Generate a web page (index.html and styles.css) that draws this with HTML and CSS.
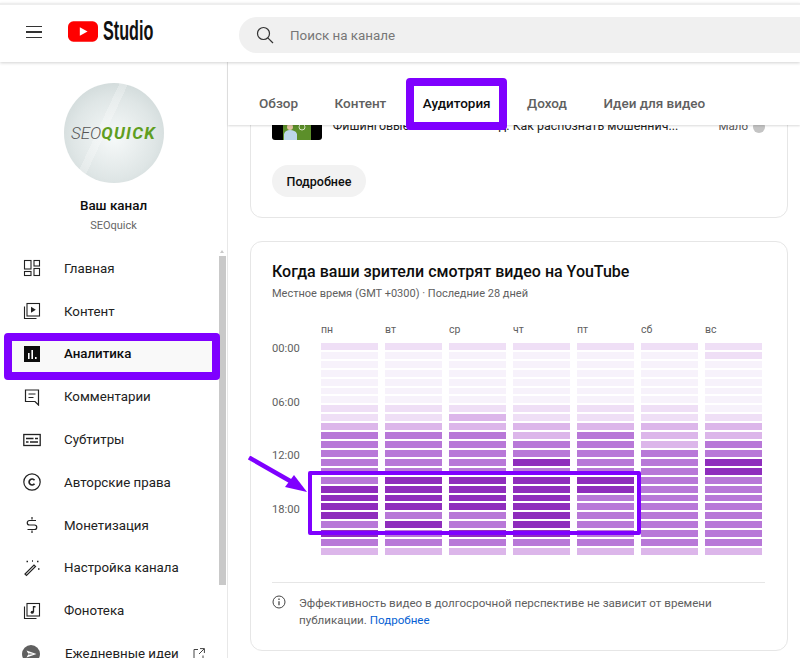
FILE: index.html
```html
<!DOCTYPE html>
<html lang="ru">
<head>
    <meta charset="UTF-8">
    <title>YouTube Studio - Аудитория</title>
    <link rel="stylesheet" href="styles.css">
</head>
<body>
    <header class="topbar">
        <button class="menu-btn"><span></span><span></span><span></span></button>
        <a href="#" class="logo">
            <svg width="30" height="21" viewBox="0 0 31 21"><rect width="31" height="21" rx="5.5" fill="#f00"/><path d="M12.2 6v9l8-4.5z" fill="#fff"/></svg>
            <span class="logo-text">Studio</span>
        </a>
        <div class="search">
            <svg width="18" height="18" viewBox="0 0 18 18" fill="none" stroke="#333" stroke-width="1.2"><circle cx="7.5" cy="7.5" r="6"/><path d="M11.8 11.8l5.2 5.2"/></svg>
            <span>Поиск на канале</span>
        </div>
    </header>

    <div class="layout">
        <aside class="sidebar">
            <div class="channel">
                <div class="avatar"><span class="seo">SEO</span><span class="quick">QUICK</span></div>
                <div class="channel-name">Ваш канал</div>
                <div class="channel-handle">SEOquick</div>
            </div>
            <nav class="nav">
                <a href="#" class="nav-item">
                    <svg width="18" height="18" viewBox="0 0 18 18" fill="none" stroke="currentColor" stroke-width="1.1"><rect x="1.5" y="1.5" width="6.5" height="8.5"/><rect x="11" y="1.5" width="5.5" height="5.5"/><rect x="1.5" y="12.5" width="6.5" height="4"/><rect x="11" y="9.5" width="5.5" height="7"/></svg>
                    Главная
                </a>
                <a href="#" class="nav-item">
                    <svg width="18" height="18" viewBox="0 0 18 18" fill="none" stroke="currentColor" stroke-width="1.1"><rect x="4" y="1.5" width="12.5" height="12.5"/><path d="M8 4.8v6l4.8-3z" fill="currentColor" stroke="none"/><path d="M1.5 4.5v12h12"/></svg>
                    Контент
                </a>
                <a href="#" class="nav-item active">
                    <svg width="18" height="18" viewBox="0 0 18 18"><rect x="1" y="1" width="16" height="16" fill="#0d0d0d"/><path d="M5 8h1.6v6H5zM8.4 5h1.6v9H8.4zM12 12h1.6v2H12z" fill="#fff"/></svg>
                    Аналитика
                </a>
                <a href="#" class="nav-item">
                    <svg width="18" height="18" viewBox="0 0 18 18" fill="none" stroke="currentColor" stroke-width="1.2"><path d="M2.5 2h13v15l-3.5-3.500h-9.500z"/><path d="M5.500 6h7M5.500 9.500h5"/></svg>
                    Комментарии
                </a>
                <a href="#" class="nav-item">
                    <svg width="18" height="18" viewBox="0 0 18 18" fill="none" stroke="currentColor" stroke-width="1.3"><rect x="0.800" y="3.500" width="16.400" height="11"/><path d="M3 7.500h7.500M12 7.500h3M3 11h2.500M7 11h8"/></svg>
                    Субтитры
                </a>
                <a href="#" class="nav-item">
                    <svg width="18" height="18" viewBox="0 0 18 18" fill="none" stroke="currentColor"><circle cx="9" cy="9" r="8.200" stroke-width="1.200"/><path d="M11.500 7.200a3 3 0 1 0 0 3.600" stroke-width="1.700"/></svg>
                    Авторские права
                </a>
                <a href="#" class="nav-item">
                    <svg width="18" height="18" viewBox="0 0 18 18" fill="none" stroke="currentColor" stroke-width="1.200"><path d="M13 4.500h-6.500a2.200 2.200 0 0 0 0 4.500h5a2.200 2.200 0 0 1 0 4.500h-7M9 1v2.500M9 14.500v2.500"/></svg>
                    Монетизация
                </a>
                <a href="#" class="nav-item">
                    <svg width="18" height="18" viewBox="0 0 18 18" fill="none" stroke="currentColor" stroke-width="1.200"><path d="M2 15l1.500 1.500 9-9-1.500-1.500z"/><path d="M3.500 2.500h1.500M14 2.500h1.500M15 10h1.500M9 2h1" stroke-width="1.600"/></svg>
                    Настройка канала
                </a>
                <a href="#" class="nav-item">
                    <svg width="18" height="18" viewBox="0 0 18 18" fill="none" stroke="currentColor" stroke-width="1.100"><rect x="4" y="1.500" width="12.500" height="12.500"/><path d="M1.500 4.500v12h12"/><path d="M10.500 4v6" stroke-width="1.300"/><circle cx="9.200" cy="10.200" r="1.500" fill="currentColor" stroke="none"/><path d="M10.500 4h2v1.500h-2z" fill="currentColor" stroke="none"/></svg>
                    Фонотека
                </a>
                <a href="#" class="nav-item nav-item-ideas">
                    <svg width="18" height="18" viewBox="0 0 18 18"><circle cx="9" cy="9" r="9" fill="#606060"/><path d="M4.500 5.500l10 3.500-10 3.500 2-3.500z" fill="#fff"/><path d="M6.500 8.200l5 .8-5 .8z" fill="#606060"/></svg>
                    Ежедневные идеи
                    <svg class="external" width="12" height="12" viewBox="0 0 12 12" fill="none" stroke="#444" stroke-width="1"><path d="M5 1.500h-4v10h9v-4M7 .6h4.400v4.400M11.200.800l-5.200 5.200"/></svg>
                </a>
            </nav>
            <div class="scrollbar"></div>
        </aside>

        <main class="main">
            <div class="tabs">
                <a href="#" class="tab">Обзор</a>
                <a href="#" class="tab">Контент</a>
                <a href="#" class="tab active">Аудитория</a>
                <a href="#" class="tab">Доход</a>
                <a href="#" class="tab">Идеи для видео</a>
            </div>
            <div class="scroll-area">
                <section class="card card-videos">
                    <div class="video-row">
                        <div class="thumb">
                            <svg width="28" height="28" viewBox="0 0 28 28"><rect width="28" height="28" fill="#5c8f2a"/><circle cx="7" cy="15" r="3" fill="#e3c3a4"/><path d="M1 28v-6c1-3 3-4 6-4s6 1 7 4v6z" fill="#bcd6ea"/><circle cx="19" cy="15" r="3" fill="none" stroke="#d7e5c4"/></svg>
                        </div>
                        <span class="video-title">Фишинговые</span>
                        <span class="video-desc">д. Как распознать мошеннич...</span>
                        <span class="video-level">Мало</span>
                        <span class="level-dot"></span>
                    </div>
                    <button class="more-btn">Подробнее</button>
                </section>

                <section class="card card-heatmap">
                    <h2 class="card-title">Когда ваши зрители смотрят видео на YouTube</h2>
                    <p class="card-sub">Местное время (GMT +0300) · Последние 28 дней</p>

                    <div class="heatmap">
                        <div class="times">
                            <span>00:00</span>
                            <span>06:00</span>
                            <span>12:00</span>
                            <span>18:00</span>
                        </div>
                        <div class="day">
                            <div class="day-name">пн</div>
                            <div class="cells">
                                <i class="l1"></i><i></i><i></i><i></i><i></i><i></i><i></i><i class="l1"></i>
                                <i class="l1"></i><i class="l2"></i><i class="l3"></i><i class="l3"></i><i class="l3"></i><i class="l3"></i><i class="l3"></i><i class="l3"></i>
                                <i class="l4"></i><i class="l4"></i><i class="l4"></i><i class="l4"></i><i class="l3"></i><i class="l4"></i><i class="l3"></i><i class="l2"></i>
                            </div>
                        </div>
                        <div class="day">
                            <div class="day-name">вт</div>
                            <div class="cells">
                                <i class="l1"></i><i></i><i></i><i></i><i></i><i></i><i></i><i class="l1"></i>
                                <i class="l1"></i><i class="l2"></i><i class="l3"></i><i class="l3"></i><i class="l3"></i><i class="l3"></i><i class="l3"></i><i class="l4"></i>
                                <i class="l4"></i><i class="l4"></i><i class="l4"></i><i class="l3"></i><i class="l4"></i><i class="l3"></i><i class="l3"></i><i class="l2"></i>
                            </div>
                        </div>
                        <div class="day">
                            <div class="day-name">ср</div>
                            <div class="cells">
                                <i class="l1"></i><i></i><i></i><i></i><i></i><i></i><i></i><i class="l1"></i>
                                <i class="l2"></i><i class="l2"></i><i class="l3"></i><i class="l3"></i><i class="l3"></i><i class="l3"></i><i class="l3"></i><i class="l4"></i>
                                <i class="l4"></i><i class="l4"></i><i class="l4"></i><i class="l3"></i><i class="l3"></i><i class="l4"></i><i class="l3"></i><i class="l2"></i>
                            </div>
                        </div>
                        <div class="day">
                            <div class="day-name">чт</div>
                            <div class="cells">
                                <i class="l1"></i><i></i><i></i><i></i><i></i><i></i><i></i><i class="l1"></i>
                                <i class="l1"></i><i class="l2"></i><i class="l2"></i><i class="l3"></i><i class="l3"></i><i class="l4"></i><i class="l3"></i><i class="l4"></i>
                                <i class="l4"></i><i class="l4"></i><i class="l4"></i><i class="l4"></i><i class="l4"></i><i class="l4"></i><i class="l3"></i><i class="l2"></i>
                            </div>
                        </div>
                        <div class="day">
                            <div class="day-name">пт</div>
                            <div class="cells">
                                <i class="l1"></i><i></i><i></i><i></i><i></i><i></i><i></i><i class="l1"></i>
                                <i class="l1"></i><i class="l2"></i><i class="l3"></i><i class="l3"></i><i class="l3"></i><i class="l3"></i><i class="l3"></i><i class="l4"></i>
                                <i class="l4"></i><i class="l3"></i><i class="l3"></i><i class="l3"></i><i class="l3"></i><i class="l3"></i><i class="l3"></i><i class="l2"></i>
                            </div>
                        </div>
                        <div class="day">
                            <div class="day-name">сб</div>
                            <div class="cells">
                                <i class="l1"></i><i></i><i></i><i></i><i></i><i></i><i></i><i class="l1"></i>
                                <i class="l1"></i><i class="l2"></i><i class="l2"></i><i class="l2"></i><i class="l3"></i><i class="l3"></i><i class="l3"></i><i class="l3"></i>
                                <i class="l3"></i><i class="l3"></i><i class="l3"></i><i class="l3"></i><i class="l3"></i><i class="l3"></i><i class="l3"></i><i class="l2"></i>
                            </div>
                        </div>
                        <div class="day">
                            <div class="day-name">вс</div>
                            <div class="cells">
                                <i class="l1"></i><i class="l1"></i><i></i><i></i><i></i><i></i><i></i><i></i>
                                <i class="l1"></i><i class="l2"></i><i class="l2"></i><i class="l3"></i><i class="l3"></i><i class="l4"></i><i class="l4"></i><i class="l3"></i>
                                <i class="l3"></i><i class="l3"></i><i class="l3"></i><i class="l3"></i><i class="l3"></i><i class="l3"></i><i class="l3"></i><i class="l2"></i>
                            </div>
                        </div>
                    </div>

                    <div class="note">
                        <svg width="14" height="14" viewBox="0 0 14 14" fill="none" stroke="#444" stroke-width="1"><circle cx="7" cy="7" r="6"/><path d="M7 6.200v4" stroke-width="1.300"/><path d="M7 3.600v1.300" stroke-width="1.300"/></svg>
                        <p>Эффективность видео в долгосрочной перспективе не зависит от времени публикации. <a href="#">Подробнее</a></p>
                    </div>
                </section>
            </div>
        </main>
    </div>

    <!-- purple marks drawn over the screenshot -->
    <div class="mark mark-tab"></div>
    <div class="mark mark-nav"></div>
    <div class="mark mark-heatmap"></div>
    <svg class="mark-arrow" width="64" height="40" viewBox="0 0 64 40"><path d="M1 1.500l42 24" stroke="#7f00ff" stroke-width="4.500" fill="none"/><path d="M59 36l-22-5 9-12z" fill="#7f00ff"/></svg>
</body>
</html>
```

FILE: styles.css
```css
* {
    margin: 0;
    padding: 0;
    box-sizing: border-box;
}

body {
    position: relative;
    height: 658px;
    overflow: hidden;
    background: white;
    font-family: Roboto, "Liberation Sans", sans-serif;
    color: #0d0d0d;
}

a {
    text-decoration: none;
    color: inherit;
}

/* Top bar */
.topbar {
    position: relative;
    z-index: 3;
    height: 59px;
    margin-top: 3px;
    padding-top: 3px;
    display: flex;
    align-items: center;
    background: white;
    border-top: 2px solid #eee;
    box-shadow: 0 1px 3px rgba(0, 0, 0, 0.18);
}

.menu-btn {
    width: 16px;
    margin: 0 0 6px 26px;
    display: flex;
    flex-direction: column;
    gap: 4.6px;
    border: none;
    background: none;
}

.menu-btn span {
    height: 1.2px;
    background: #333;
}

.logo {
    display: flex;
    align-items: center;
    gap: 5px;
    margin: 0 0 8px 26px;
}

/* no narrow font here, so squeeze the bold one */
.logo-text {
    width: 51px;
    font-family: "Liberation Sans", sans-serif;
    font-size: 27px;
    font-weight: 700;
    color: #111;
    transform: scaleX(0.6);
    transform-origin: left center;
}

.search {
    flex: 1;
    height: 36px;
    margin-left: 85px;
    padding-left: 17px;
    display: flex;
    align-items: center;
    gap: 16px;
    background: #f0f0f0;
    border-radius: 18px 0 0 18px;
    font-size: 13.400px;
    color: #777;
}

/* Page columns */
.layout {
    display: flex;
    height: 596px;
}

.sidebar {
    position: relative;
    width: 228px;
    flex-shrink: 0;
    overflow: hidden;
    border-right: 1px solid #e8e8e8;
}

.channel {
    height: 185px;
    padding-top: 21px;
    display: flex;
    flex-direction: column;
    align-items: center;
}

.avatar {
    width: 100px;
    height: 100px;
    border-radius: 50%;
    display: flex;
    align-items: center;
    justify-content: center;
    background:
        linear-gradient(115deg, transparent 38%, rgba(255, 255, 255, 0.25) 38%, rgba(255, 255, 255, 0.25) 44%, transparent 44%),
        radial-gradient(circle at 50% 55%, #f6f9f9 0%, #dfe6e6 55%, #c4cfcf 100%);
    font-style: italic;
}

.seo {
    font-size: 17px;
    font-weight: 300;
    color: #555;
}

.quick {
    font-size: 17px;
    font-weight: 700;
    color: #5f9e1f;
    letter-spacing: 1.300px;
}

.channel-name {
    margin-top: 15px;
    font-size: 13.400px;
    font-weight: 500;
    line-height: 16px;
}

.channel-handle {
    margin-top: 5px;
    font-size: 11px;
    line-height: 14px;
    color: #666;
}

.nav-item {
    height: 42.800px;
    display: flex;
    align-items: center;
    gap: 23px;
    padding-left: 23px;
    font-size: 13.300px;
    color: #222;
}

.nav-item.active {
    margin: 0 15px 0 12px;
    padding-left: 11px;
    font-weight: 500;
    color: #0d0d0d;
    background: #f9f9f9;
}

.nav-item-ideas {
    padding-left: 22px;
    gap: 25px;
}

.external {
    margin-left: -11px;
}

.scrollbar {
    position: absolute;
    top: 194px;
    left: 219px;
    width: 7px;
    height: 329px;
    background: #c9c9c9;
}

.scrollbar::before {
    content: "";
    position: absolute;
    top: -6px;
    left: 1px;
    border: 2.500px solid transparent;
    border-top: none;
    border-bottom: 3px solid #c9c9c9;
}

/* Right side */
.main {
    flex: 1;
    min-width: 0;
    display: flex;
    flex-direction: column;
}

.tabs {
    position: relative;
    z-index: 2;
    height: 63px;
    flex-shrink: 0;
    display: flex;
    align-items: center;
    gap: 36.500px;
    padding: 19px 0 0 31px;
    background: white;
    box-shadow: 0 1px 2px rgba(0, 0, 0, 0.15);
}

.tab {
    font-size: 13.500px;
    font-weight: 500;
    color: #606060;
}

.tab.active {
    color: #0d0d0d;
}

.scroll-area {
    flex: 1;
    overflow: hidden;
    padding: 0 12px 0 22px;
}

.card {
    border: 1px solid #e6e6e6;
    border-radius: 12px;
    background: white;
    padding: 0 22px 0 21px;
}

.card-videos {
    height: 118px;
    margin-top: -25px;
    padding-top: 11px;
}

.video-row {
    display: flex;
    align-items: flex-start;
    font-size: 12.400px;
    line-height: 16px;
    color: #222;
}

.thumb {
    width: 50px;
    height: 28px;
    padding-left: 11px;
    background: black;
    border-radius: 0 0 3px 3px;
    overflow: hidden;
}

.thumb svg {
    display: block;
}

.video-title {
    width: 167px;
    margin: 6px 0 0 11px;
}

.video-desc {
    width: 221px;
    margin-top: 6px;
}

.video-level {
    margin-top: 6px;
    font-size: 11.500px;
    color: #555;
}

.level-dot {
    width: 12px;
    height: 12px;
    margin: 9px 0 0 5px;
    border-radius: 50%;
    background: #c4c4c4;
}

.more-btn {
    display: block;
    width: 94px;
    height: 32px;
    margin-top: 25px;
    border: none;
    border-radius: 16px;
    background: #f2f2f2;
    font-family: inherit;
    font-size: 12.500px;
    font-weight: 500;
    color: #0d0d0d;
}

.card-heatmap {
    height: 410px;
    margin-top: 23px;
    padding-top: 20px;
}

.card-title {
    font-size: 16px;
    font-weight: 500;
    line-height: 20px;
}

.card-sub {
    margin-top: 4px;
    font-size: 11px;
    line-height: 16px;
    color: #606060;
}

.heatmap {
    display: flex;
    gap: 7px;
    margin-top: 21px;
}

.times {
    width: 42px;
    padding-top: 18px;
    font-size: 11.200px;
    color: #606060;
}

.times span {
    display: block;
    height: 53.600px;
    line-height: 16px;
}

.day {
    width: 57px;
}

.day-name {
    height: 20px;
    font-size: 10.500px;
    line-height: 14px;
    color: #606060;
}

.cells {
    height: 212px;
    display: grid;
    grid-template-rows: repeat(24, 1fr);
    gap: 2px;
}

.cells i {
    background: #f7f2fb;
}

.cells .l1 {
    background: #efdff6;
}

.cells .l2 {
    background: #dcb6ea;
}

.cells .l3 {
    background: #b878d8;
}

.cells .l4 {
    background: #8f2dbd;
}

.note {
    display: flex;
    gap: 13px;
    margin-top: 27px;
    padding-top: 12px;
    border-top: 1px solid #e6e6e6;
    font-size: 11.600px;
    line-height: 17px;
    color: #606060;
}

.note svg {
    flex-shrink: 0;
}

.note p {
    width: 430px;
}

.note a {
    color: #065fd4;
}

/* Annotations over the page */
.mark {
    position: absolute;
    z-index: 5;
    border: 8px solid #7f00ff;
    border-radius: 4px;
}

.mark-tab {
    left: 406px;
    top: 78px;
    width: 101px;
    height: 52px;
}

.mark-nav {
    left: 4px;
    top: 333px;
    width: 216px;
    height: 47px;
}

.mark-heatmap {
    left: 308px;
    top: 471px;
    width: 333px;
    height: 64px;
    border-width: 4.500px;
    border-radius: 2px;
}

.mark-arrow {
    position: absolute;
    z-index: 5;
    left: 248px;
    top: 456px;
}
```
